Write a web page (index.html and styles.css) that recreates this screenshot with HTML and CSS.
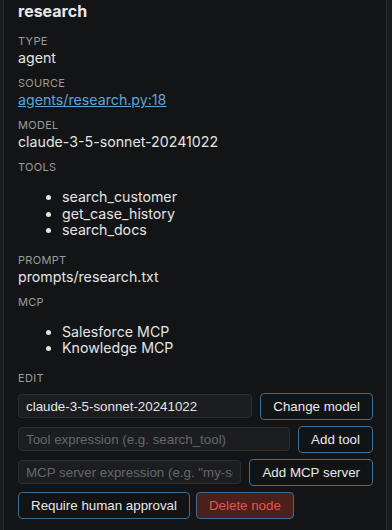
FILE: index.html
```html
<!DOCTYPE html>
<html>
<head>
<meta charset="utf-8">
<link rel="stylesheet" href="styles.css">
</head>
<body>
<div class="frame">
  <aside class="panel">
    <h2 class="title">research</h2>
    <section class="field">
      <div class="label">Type</div>
      <div class="value">agent</div>
    </section>
    <section class="field">
      <div class="label">Source</div>
      <div class="value"><a class="link" href="#">agents/research.py:18</a></div>
    </section>
    <section class="field">
      <div class="label">Model</div>
      <div class="value">claude-3-5-sonnet-20241022</div>
    </section>
    <section class="field">
      <div class="label">Tools</div>
      <ul class="list">
        <li>search_customer</li>
        <li>get_case_history</li>
        <li>search_docs</li>
      </ul>
    </section>
    <section class="field">
      <div class="label">Prompt</div>
      <div class="value">prompts/research.txt</div>
    </section>
    <section class="field">
      <div class="label">MCP</div>
      <ul class="list">
        <li>Salesforce MCP</li>
        <li>Knowledge MCP</li>
      </ul>
    </section>
    <section class="field">
      <div class="label">Edit</div>
      <div class="edit">
        <div class="row">
          <input class="input" type="text" value="claude-3-5-sonnet-20241022">
          <button class="btn">Change model</button>
        </div>
        <div class="row">
          <input class="input" type="text" placeholder="Tool expression (e.g. search_tool)">
          <button class="btn">Add tool</button>
        </div>
        <div class="row">
          <input class="input" type="text" placeholder="MCP server expression (e.g. &quot;my-server&quot;)">
          <button class="btn">Add MCP server</button>
        </div>
        <div class="row actions">
          <button class="btn">Require human approval</button>
          <button class="btn danger">Delete node</button>
        </div>
      </div>
    </section>
  </aside>
</div>
</body>
</html>
```
FILE: styles.css
```css
* { box-sizing: border-box; }
html, body {
  margin: 0;
  padding: 0;
  background: #141517;
  height: 100%;
  overflow: hidden;
}
body {
  font-family: Inter, "Liberation Sans", Arial, sans-serif;
  color: #e4e4e4;
}
.frame {
  height: 530px;
  padding-left: 3px;
  padding-right: 5px;
  background: #1a1b1d;
}
.panel {
  height: 100%;
  background: #131416;
  border-left: 1px solid #2a2b2e;
  border-right: 1px solid #2e2f32;
  padding: 0 13px 0 14px;
  overflow: hidden;
}
.title {
  margin: 0;
  font-size: 16px;
  line-height: 22px;
  font-weight: bold;
  color: #e8e8e8;
}
.field { margin-top: 10px; }
.title + .field { margin-top: 12px; }
.label {
  font-size: 11px;
  line-height: 15px;
  text-transform: uppercase;
  letter-spacing: 0.3px;
  color: #9a9b9d;
}
.value {
  font-size: 14.2px;
  line-height: 17px;
  color: #e4e4e4;
}
.link { color: #5ba6d6; text-decoration: underline; }
.list {
  margin: 14px 0 14px;
  padding-left: 44px;
  font-size: 14.2px;
  line-height: 16.5px;
}
.field:has(.list) + .field { margin-top: 0; }
.edit {
  margin-top: 7px;
  display: flex;
  flex-direction: column;
  gap: 6px;
}
.row {
  display: flex;
  align-items: center;
  gap: 8px;
}
.row.actions { gap: 6px; }
.input {
  flex: 1;
  min-width: 0;
  height: 24px;
  background: #1c1d20;
  border: 1px solid #2d2e31;
  border-radius: 4px;
  padding: 0 7px;
  color: #e4e4e4;
  font-family: "Liberation Sans", Arial, sans-serif;
  font-size: 13.333px;
  outline: none;
}
.input::placeholder { color: #66676a; }
.btn {
  flex: none;
  height: 27px;
  padding: 0 12px;
  background: #121315;
  border: 1px solid #3b6c91;
  border-radius: 4px;
  color: #e8e8e8;
  font-family: "Liberation Sans", Arial, sans-serif;
  font-size: 13.333px;
}
.btn.danger {
  background: #4a1f1c;
  color: #e2574e;
}
```
